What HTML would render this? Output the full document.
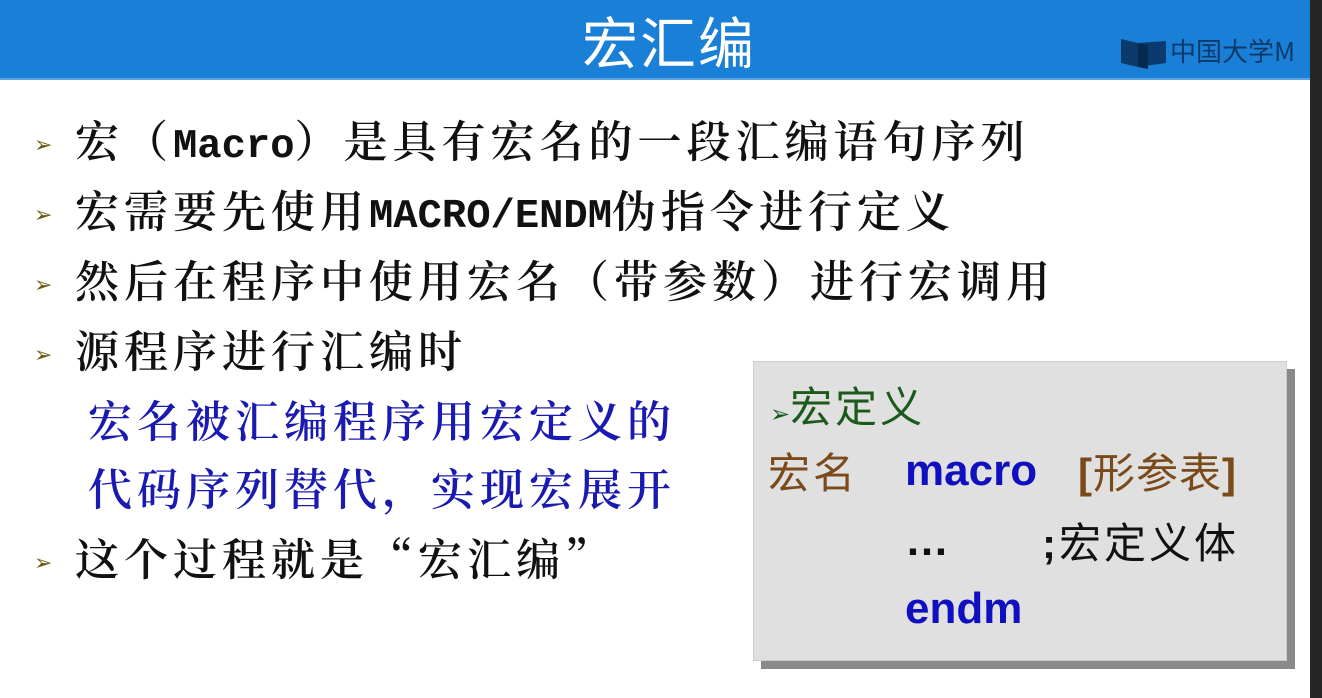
<!DOCTYPE html>
<html><head><meta charset="utf-8"><style>
body{margin:0;width:1322px;height:698px;overflow:hidden;background:#fff;position:relative;font-family:"Liberation Serif","Noto Serif CJK SC",serif;}
.hdr{position:absolute;left:0;top:0;width:1310px;height:78px;background:#1a7fd6;border-bottom:2px solid #5aa3e0;}
.title{position:absolute;left:14px;width:1310px;top:6px;text-align:center;color:#fff;font-size:56px;font-family:"Noto Sans CJK SC",sans-serif;line-height:70px;letter-spacing:2px;}
.logo{position:absolute;left:1120px;top:34px;color:#0c3a6a;font-size:26px;font-family:"Noto Sans CJK SC",sans-serif;line-height:34px;white-space:nowrap;}
.logo svg{vertical-align:middle;margin-right:2px}
.bar{position:absolute;right:0;top:0;width:12px;height:698px;background:#262626;}
.l{position:absolute;left:34px;font-size:44px;letter-spacing:5px;color:#111;white-space:nowrap;line-height:50px;font-family:"Noto Serif CJK SC",serif;font-weight:600;}
.l .m{font-family:"Liberation Mono",monospace;letter-spacing:0;font-weight:bold;font-size:40.5px;}
.l .a{display:inline-block;width:41px;font-size:22px;color:#6a5a10;vertical-align:middle;letter-spacing:0;font-family:"DejaVu Sans",sans-serif;}
.b{color:#1a1ab0;left:88px;}
.box{position:absolute;left:753px;top:361px;width:532px;height:298px;background:#e0e0e0;box-shadow:8px 8px 0 #8a8a8a;border:1px solid #ccc;}
.box div{position:absolute;white-space:nowrap;font-size:42px;line-height:50px;font-family:"Noto Sans CJK SC",sans-serif;letter-spacing:3px;}
.en{font-family:"Liberation Sans",sans-serif !important;font-weight:bold;color:#1010c0;font-size:44px !important;letter-spacing:0 !important;}
</style></head><body>
<div class="hdr"><div class="title">宏汇编</div><div class="logo"><svg width="48" height="34" viewBox="0 0 48 34"><path d="M1 2 L18 6 L18 30 L1 26Z" fill="#0c3a6a"/><path d="M18 6 L46 4 L46 26 L18 30Z" fill="#0a3a70"/><path d="M18 6 L28 8 L28 32 L18 30Z" fill="#062a50"/></svg>中国大学M</div></div>
<div class="bar"></div>
<div class="l" style="top:113px"><span class="a">➢</span>宏（<span class="m">Macro</span>）是具有宏名的一段汇编语句序列</div>
<div class="l" style="top:183px"><span class="a">➢</span>宏需要先使用<span class="m">MACRO/ENDM</span>伪指令进行定义</div>
<div class="l" style="top:253px"><span class="a">➢</span>然后在程序中使用宏名（带参数）进行宏调用</div>
<div class="l" style="top:323px"><span class="a">➢</span>源程序进行汇编时</div>
<div class="l b" style="top:393px">宏名被汇编程序用宏定义的</div>
<div class="l b" style="top:461px">代码序列替代，实现宏展开</div>
<div class="l" style="top:531px"><span class="a">➢</span>这个过程就是“宏汇编”</div>
<div class="box">
<div style="left:16px;top:18px;color:#1c5a1c"><span style="font-size:24px;letter-spacing:0">➢</span>宏定义</div>
<div style="left:14px;top:84px;color:#7a4a1a">宏名</div>
<div class="en" style="left:151px;top:84px">macro</div>
<div style="left:324px;top:84px;color:#7a4a1a;letter-spacing:1px"><b style="font-family:'Liberation Sans'">[</b>形参表<b style="font-family:'Liberation Sans'">]</b></div>
<div class="en" style="left:151px;top:154px;color:#111">…</div>
<div style="left:288px;top:154px;color:#111"><b style="font-family:'Liberation Sans'">;</b>宏定义体</div>
<div class="en" style="left:151px;top:222px">endm</div>
</div>
</body></html>
